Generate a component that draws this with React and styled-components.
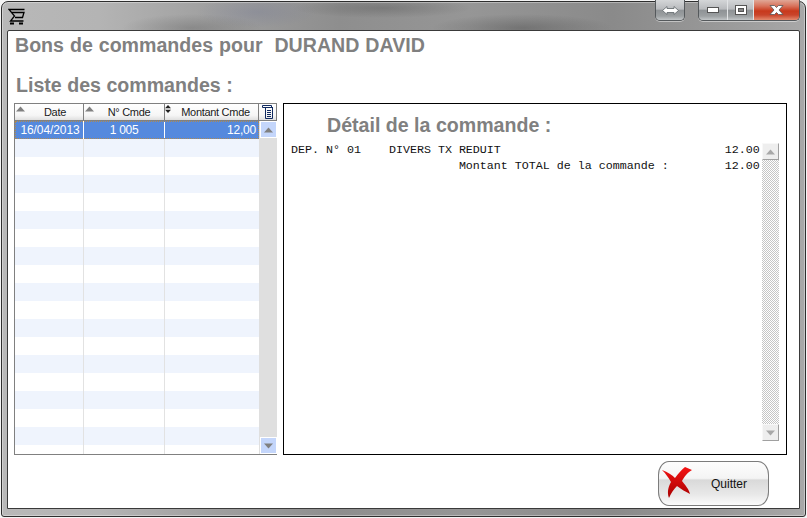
import React from "react";
import styled, { createGlobalStyle } from "styled-components";

const Global = createGlobalStyle`
  html, body { margin: 0; padding: 0; width: 807px; height: 518px; overflow: hidden; background: #fff; }
  #root { width: 807px; height: 518px; }
  * { box-sizing: border-box; }
`;

const Frame = styled.div`
  width: 807px; height: 518px;
  display: flex; flex-direction: column;
  padding: 1px 1px 1px 1px;
  background: #f4f4f4;
`;
const Glass = styled.div`
  flex: 1; min-height: 0;
  display: flex; flex-direction: column;
  border: 1px solid #2e2e2e;
  border-radius: 7px 7px 3px 3px;
  padding: 0 5px 7px 5px;
  background:
    radial-gradient(ellipse 70px 14px at 190px 26px, rgba(90,90,90,.35), transparent),
    radial-gradient(ellipse 90px 14px at 520px 26px, rgba(70,70,70,.4), transparent),
    radial-gradient(ellipse 60px 16px at 255px 10px, rgba(120,125,150,.35), transparent),
    radial-gradient(ellipse 90px 10px at 380px 6px, rgba(70,70,70,.3), transparent),
    linear-gradient(90deg, #b8b8b8 0, #b4b4b4 12%, #a0a0a0 26%, #8e8e8e 42%, #969696 58%, #8a8a8a 76%, #979797 88%, #a8a8a8 100%);
  box-shadow: inset 0 0 0 1px rgba(255,255,255,.35);
`;
const TitleBar = styled.div`
  height: 28px; flex: none;
  display: flex; align-items: flex-start;
`;
const CartSlot = styled.div`
  width: 17px; height: 17px; margin: 6px 0 0 1px;
  svg { display: block; }
`;
const Spacer = styled.div` flex: 1; `;
const CaptionGroup = styled.div`
  display: flex; height: 21px;
  margin-top: -2px;
  margin-left: ${p => p.$gap || 0}px;
  border: 1px solid #55595c; border-top: none;
  border-radius: 0 0 5px 5px;
  overflow: hidden;
  box-shadow: 0 1px 0 rgba(255,255,255,.45);
`;
const CaptionBtn = styled.div`
  width: ${p => p.$w}px; display: flex; align-items: center; justify-content: center;
  background: ${p => p.$red
    ? "linear-gradient(180deg,#e0a796 0,#d8735c 30%,#c8391c 55%,#c9442a 75%,#e38a6e 100%)"
    : "linear-gradient(180deg,#d4d6d8 0,#b9bbbe 45%,#8f9396 52%,#9ca0a2 80%,#c2c6c8 100%)"};
  & + & { border-left: 1px solid #e2e4e6; }
  svg { display: block; }
`;
const Client = styled.div`
  flex: 1; min-height: 0;
  display: flex; flex-direction: column;
  background: #fff;
  border: 1px solid #3a3a3a;
  border-radius: 2px 2px 0 0;
  padding: 0 12px 0 6px;
`;
const Heading = styled.div`
  font: bold 19.6px/21px "Liberation Sans", Arial, sans-serif;
  color: #808080;
  white-space: pre;
`;
const PageTitle = styled(Heading)` margin: 4px 0 0 1px; word-spacing: 0.5px; `;
const ListTitle = styled(Heading)` margin: 19px 0 7px 2px; `;
const Panels = styled.div`
  display: flex; gap: 6px; height: 352px; flex: none;
`;
const Grid = styled.div`
  width: 263px; display: flex; flex-direction: column;
  border: 1px solid #808080;
  background: #fff;
`;
const HeadRow = styled.div`
  display: flex; height: 17px; flex: none;
  background: linear-gradient(180deg,#fff 0,#f6f6f6 70%,#e0e0e0 100%);
  border-bottom: 1px solid #808080;
`;
const HeadCell = styled.div`
  position: relative;
  width: ${p => p.$w}px; flex: none;
  border-right: 1px solid #808080;
  font: 11px/17px "Liberation Sans", Arial, sans-serif;
  letter-spacing: -0.3px;
  color: #1a1a1a; text-align: center;
  padding-left: ${p => p.$pl || 0}px;
`;
const Tri = ({ d = "up", c = "#808080", className }) => (
  <svg className={className} width="9" height="6" viewBox="0 0 9 6">
    <path d={d === "up" ? "M4.5 0.5 L9 5.5 H0Z" : "M0 .5 H9 L4.5 5.5Z"} fill={c} />
  </svg>
);
const SortTri = styled(Tri)`
  position: absolute; left: 1px; top: 2px;
`;
const SortBoth = styled.svg`
  position: absolute; left: 0; top: 1px;
`;
const ColumnsIcon = styled.div`
  flex: 1; display: flex; align-items: center; justify-content: center;
  svg { display: block; }
`;
const GridBody = styled.div` flex: 1; min-height: 0; display: flex; `;
const Rows = styled.div` width: 244px; flex: none; display: flex; flex-direction: column; overflow: hidden; `;
const Row = styled.div`
  display: flex; height: 18px; flex: none;
  background: ${p => p.$selected ? "#5589dd" : p.$alt ? "#eff4fd" : "#fff"};
  color: #fff;
  ${p => p.$selected && "outline: 1px dotted #b08a50; outline-offset: -1px;"}
`;
const Cell = styled.div`
  width: ${p => p.$w}px; flex: none;
  border-right: 1px solid ${p => p.$selected ? "#fff" : "#e2e2e2"};
  font: 12px/19px "Liberation Sans", Arial, sans-serif;
  letter-spacing: ${p => p.$ls ?? -0.1}px;
  text-align: ${p => p.$align || "center"};
  padding: 0 2px 0 ${p => p.$pl ?? 2}px;
`;
const LastCell = styled(Cell)` border-right: none; padding-right: 3px; `;
const ScrollTrack = styled.div`
  flex: 1; display: flex; flex-direction: column; justify-content: space-between;
  background: #dfdfdf; padding: 0 0 0 1px;
`;
const ScrollBtn = styled.div`
  height: 17px; width: 17px;
  background: #c4d6fb; border: 1px solid #fff;
  display: flex; align-items: center; justify-content: center;
  svg { display: block; }
`;
const Detail = styled.div`
  flex: 1; min-width: 0;
  display: flex; flex-direction: column;
  border: 1px solid #000;
  padding: 11px 8px 13px 7px;
`;
const DetailTitle = styled(Heading)` margin-left: 36px; `;
const DetailBody = styled.div`
  flex: 1; min-height: 0; display: flex; margin-top: 6px;
`;
const Mono = styled.pre`
  margin: 0; width: 471px; flex: none;
  font: 11.67px/16px "Liberation Mono", "Courier New", monospace;
  color: #111;
`;
const DitherBar = styled.div`
  width: 17px; flex: none; display: flex; flex-direction: column; justify-content: space-between;
  background-image: conic-gradient(#c6c6c6 25%, #fff 0 50%, #c6c6c6 0 75%, #fff 0);
  background-size: 2px 2px;
  margin-top: 1px;
`;
const ClassicBtn = styled.div`
  height: 17px; background: #eee;
  border: 1px solid; border-color: #f8f8f8 #a0a0a0 #a0a0a0 #f8f8f8;
  display: flex; align-items: center; justify-content: center;
  svg { display: block; }
`;
const Footer = styled.div`
  flex: 1; display: flex; justify-content: flex-end; align-items: flex-start;
  padding: 6px 18px 0 0;
`;
const Quit = styled.div`
  width: 111px; height: 45px;
  display: flex; align-items: center;
  position: relative;
  border: 1px solid #7c7c7c;
  border-radius: 11px / 14px;
  background: linear-gradient(180deg,#fdfdfd 0,#f4f4f4 38%,#d9d9d9 42%,#e8e8e8 75%,#fbfbfb 100%);
  font: 12px/14px "Liberation Sans", Arial, sans-serif;
  color: #111;
  padding-left: 52px;
`;
const QuitX = styled.svg`
  position: absolute; left: 3px; top: 5px;
`;

const Rows18 = Array.from({ length: 18 });

export default function App() {
  return (
    <Frame>
      <Global />
      <Glass>
        <TitleBar>
          <CartSlot>
            <svg width="17" height="17" viewBox="0 0 17 17" fill="none" stroke="#000" strokeWidth="1.3">
              <path d="M16.5 1.5 H1 L6.5 8 L2.5 13 H15.5" />
              <path d="M4 4.5 H16 L14.5 9.5 H7" />
              <path d="M2 15.5 H6 M11 15.5 H15" strokeWidth="2" />
            </svg>
          </CartSlot>
          <Spacer />
          <CaptionGroup>
            <CaptionBtn $w={28}>
              <svg width="17" height="9" viewBox="0 0 17 9"><path d="M.5 4.5 L5 .5 V2.5 H12 V.5 L16.5 4.5 L12 8.5 V6.5 H5 V8.5Z" fill="#fff" stroke="#6a7074" strokeWidth=".9" /></svg>
            </CaptionBtn>
          </CaptionGroup>
          <CaptionGroup $gap={13}>
            <CaptionBtn $w={28}>
              <svg width="12" height="6" viewBox="0 0 12 6"><rect x=".5" y=".5" width="11" height="5" fill="#fff" stroke="#555" /></svg>
            </CaptionBtn>
            <CaptionBtn $w={26}>
              <svg width="12" height="10" viewBox="0 0 12 10"><rect x=".5" y=".5" width="11" height="9" fill="#fff" stroke="#555" /><rect x="3.5" y="3.5" width="5" height="3" fill="#888" stroke="#555" /></svg>
            </CaptionBtn>
            <CaptionBtn $w={46} $red>
              <svg width="15" height="10" viewBox="0 0 15 10"><path d="M1 .5 H5.5 L7.5 2.5 L9.5 .5 H14 L10 5 L14 9.5 H9.5 L7.5 7.5 L5.5 9.5 H1 L5 5Z" fill="#fff" stroke="#555" strokeWidth=".8" /></svg>
            </CaptionBtn>
          </CaptionGroup>
        </TitleBar>
        <Client>
          <PageTitle>{"Bons de commandes pour  DURAND DAVID"}</PageTitle>
          <ListTitle>Liste des commandes :</ListTitle>
          <Panels>
            <Grid>
              <HeadRow>
                <HeadCell $w={69} $pl={12}><SortTri />Date</HeadCell>
                <HeadCell $w={81} $pl={10}><SortTri />N° Cmde</HeadCell>
                <HeadCell $w={94} $pl={8}>
                  <SortBoth width="6" height="8" viewBox="0 0 6 8"><path d="M3 0 L6 3.2 H0Z M0 4.8 H6 L3 8Z" fill="#222" /></SortBoth>
                  Montant Cmde
                </HeadCell>
                <ColumnsIcon>
                  <svg width="12" height="14" viewBox="0 0 12 14" fill="none" stroke="#102a60"><path d="M.5 .5 H9.5 V2.5" /><path d="M.5 .5 V2.5 H11" /><path d="M3.5 2.5 H10.5 V13.5 H3.5Z" /><path d="M5 5.5 H9 M5 7.5 H9 M5 9.5 H9 M5 11.5 H9" /></svg>
                </ColumnsIcon>
              </HeadRow>
              <GridBody>
                <Rows>
                  <Row $selected>
                    <Cell $w={69} $selected $pl={4}>16/04/2013</Cell>
                    <Cell $w={81} $selected $ls={-0.3}>1 005</Cell>
                    <LastCell $w={94} $align="right" $ls={-0.2}>12,00</LastCell>
                  </Row>
                  {Rows18.map((_, i) => (
                    <Row key={i} $alt={i % 2 === 0}>
                      <Cell $w={69} />
                      <Cell $w={81} />
                      <LastCell $w={94} />
                    </Row>
                  ))}
                </Rows>
                <ScrollTrack>
                  <ScrollBtn><Tri /></ScrollBtn>
                  <ScrollBtn><Tri d="down" /></ScrollBtn>
                </ScrollTrack>
              </GridBody>
            </Grid>
            <Detail>
              <DetailTitle>Détail de la commande :</DetailTitle>
              <DetailBody>
                <Mono>{"DEP. N° 01    DIVERS TX REDUIT                                12.00\n                        Montant TOTAL de la commande :        12.00"}</Mono>
                <DitherBar>
                  <ClassicBtn><Tri c="#a8a8a8" /></ClassicBtn>
                  <ClassicBtn><Tri d="down" c="#a8a8a8" /></ClassicBtn>
                </DitherBar>
              </DetailBody>
            </Detail>
          </Panels>
          <Footer>
            <Quit>
              <QuitX width="30" height="31" viewBox="0 0 30 31">
                <defs>
                  <linearGradient id="qx" x1="0" y1="0" x2="0" y2="1">
                    <stop offset="0" stopColor="#f41414" />
                    <stop offset="1" stopColor="#a80000" />
                  </linearGradient>
                </defs>
                <path d="M0 3 C6 5 10 8 13 11 C16 7 19 3 23 0 L30 3 C26 5 22 10 20 14 C23 18 27 22 28 27 C24 25 19 22 15 19 C12 22 9 26 7 31 C5 26 6 20 9 15 C6 10 4 7 0 3Z" fill="url(#qx)" />
              </QuitX>
              Quitter
            </Quit>
          </Footer>
        </Client>
      </Glass>
    </Frame>
  );
}
